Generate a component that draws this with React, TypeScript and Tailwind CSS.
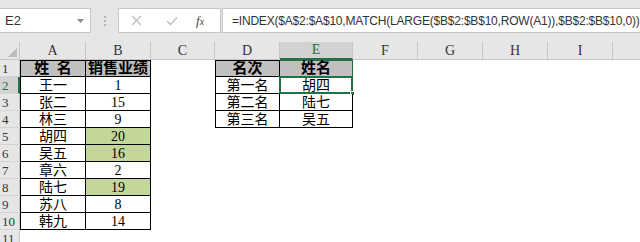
import React from "react";

const colW: Record<string, string> = {
  A: "w-[66px]",
  B: "w-[65px]",
  C: "w-[64px]",
  D: "w-[65px]",
  E: "w-[73px]",
  F: "w-[65px]",
  G: "w-[65px]",
  H: "w-[65px]",
  I: "w-[65px]",
  J: "w-[65px]",
};

const colKeys = ["A", "B", "C", "D", "E", "F", "G", "H", "I", "J"];

const colA = ["姓  名", "王一", "张二", "林三", "胡四", "吴五", "章六", "陆七", "苏八", "韩九"];
const colB = ["销售业绩", "1", "15", "9", "20", "16", "2", "19", "8", "14"];
const greenRows = [5, 6, 8];
const colD = ["名次", "第一名", "第二名", "第三名"];
const colE = ["姓名", "胡四", "陆七", "吴五"];

const cellFont = "font-['Liberation_Serif','Noto_Sans_CJK_SC',serif]";

function TableCell({
  w,
  text,
  row,
  left,
  bold,
  fill,
  selected,
  headE,
}: {
  w: string;
  text: string;
  row: number;
  left?: boolean;
  bold?: boolean;
  fill?: string;
  selected?: boolean;
  headE?: boolean;
}) {
  const top = row === 1 ? "border-t" : "";
  const l = left ? "border-l" : "";
  return (
    <div
      className={`relative box-border h-[17px] ${w} shrink-0 border-r border-b border-black ${top} ${l} ${fill ?? "bg-white"} ${headE ? "border-t-[#2d6b45] border-r-[#2d6b45]" : ""} flex items-center justify-center overflow-visible`}
    >
      <span
        className={`${cellFont} ${bold ? "font-bold text-[15px]" : "text-[14px]"} leading-[17px] text-black whitespace-pre`}
      >
        {text}
      </span>
      {selected && (
        <>
          <div className="pointer-events-none absolute -left-[1px] -top-[1px] -right-[1px] -bottom-[1px] border-2 border-[#217346]" />
          <div className="absolute -right-[3px] -bottom-[3px] h-[5px] w-[5px] border border-white bg-[#217346]" />
        </>
      )}
    </div>
  );
}

function EmptyCell({ w }: { w: string }) {
  return <div className={`h-[17px] ${w} shrink-0 bg-white`} />;
}

export default function App() {
  const rows = Array.from({ length: 11 }, (_, i) => i + 1);
  return (
    <div className="w-[640px] h-[242px] overflow-hidden bg-white">
      {/* Toolbar */}
      <div className="flex h-[42px] items-start bg-[#e6e6e6] pt-[8px]">
        <div className="box-border flex h-[25px] w-[91px] shrink-0 items-center justify-between border border-l-0 border-[#c6c6c6] bg-white pl-[5px] pr-[6px]">
          <span className="font-['Liberation_Sans',sans-serif] text-[13px] text-[#333]">E2</span>
          <svg width="7" height="4" viewBox="0 0 7 4">
            <path d="M0 0 L7 0 L3.5 4 Z" fill="#8a8a8a" />
          </svg>
        </div>
        <div className="flex w-[27px] shrink-0 flex-col items-center gap-[2px] pt-[8px]">
          <div className="h-[2px] w-[2px] bg-[#b5b5b5]" />
          <div className="h-[2px] w-[2px] bg-[#b5b5b5]" />
          <div className="h-[2px] w-[2px] bg-[#b5b5b5]" />
        </div>
        <div className="box-border flex h-[25px] w-[103px] shrink-0 items-center border border-[#c6c6c6] bg-white">
          <svg className="ml-[12px]" width="11" height="11" viewBox="0 0 11 11">
            <path d="M1 1 L10 10 M10 1 L1 10" stroke="#bdbdbd" strokeWidth="1.3" />
          </svg>
          <svg className="ml-[24px]" width="12" height="10" viewBox="0 0 12 10">
            <path d="M1 5 L4.5 8.5 L11 1.5" stroke="#bdbdbd" strokeWidth="1.3" fill="none" />
          </svg>
          <span className="ml-[18px] font-['Liberation_Serif',serif] text-[13px] italic text-[#444]">
            f<span className="text-[10px]">x</span>
          </span>
        </div>
        <div className="ml-[1px] box-border flex h-[25px] flex-1 items-center overflow-hidden border border-r-0 border-[#c6c6c6] bg-white pl-[9px]">
          <span className="font-['Liberation_Sans',sans-serif] text-[12px] tracking-[-0.2px] text-[#333] whitespace-nowrap">
            =INDEX($A$2:$A$10,MATCH(LARGE($B$2:$B$10,ROW(A1)),$B$2:$B$10,0))
          </span>
        </div>
      </div>

      {/* Column header row */}
      <div className="flex h-[18px]">
        <div className="box-border flex h-[18px] w-[20px] shrink-0 items-end justify-end border-r border-b border-[#c6c6c6] bg-[#e6e6e6] pb-[2px] pr-[2px]">
          <svg width="9" height="9" viewBox="0 0 9 9">
            <path d="M9 0 L9 9 L0 9 Z" fill="#bcbcbc" />
          </svg>
        </div>
        {colKeys.map((k) => (
          <div
            key={k}
            className={`box-border flex h-[18px] ${colW[k]} shrink-0 items-center justify-center border-r border-[#c6c6c6] ${
              k === "E"
                ? "border-b-2 border-b-[#217346] bg-[#d2d2d2] text-[#217346]"
                : "border-b border-b-[#c6c6c6] bg-[#e6e6e6] text-[#333]"
            }`}
          >
            {k !== "J" && (
              <span className="font-['Liberation_Serif',serif] text-[14px] leading-none">{k}</span>
            )}
          </div>
        ))}
      </div>

      {/* Rows */}
      {rows.map((r) => (
        <div key={r} className="flex h-[17px]">
          <div
            className={`box-border flex h-[17px] w-[20px] shrink-0 items-center border-b border-[#d4d4d4] pl-[2px] ${
              r === 2
                ? "border-r-2 border-r-[#217346] bg-[#d2d2d2] text-[#217346]"
                : "border-r border-r-[#c6c6c6] bg-[#e6e6e6] text-[#333]"
            }`}
          >
            <span className="font-['Liberation_Serif',serif] text-[13px] leading-none">{r}</span>
          </div>
          {r <= 10 ? (
            <>
              <TableCell w={colW.A} text={colA[r - 1]} row={r} left bold={r === 1} fill={r === 1 ? "bg-[#c0c0c0]" : undefined} />
              <TableCell
                w={colW.B}
                text={colB[r - 1]}
                row={r}
                bold={r === 1}
                fill={r === 1 ? "bg-[#c0c0c0]" : greenRows.includes(r) ? "bg-[#c4d79b]" : undefined}
              />
            </>
          ) : (
            <>
              <EmptyCell w={colW.A} />
              <EmptyCell w={colW.B} />
            </>
          )}
          <EmptyCell w={colW.C} />
          {r <= 4 ? (
            <>
              <TableCell w={colW.D} text={colD[r - 1]} row={r} left bold={r === 1} fill={r === 1 ? "bg-[#c0c0c0]" : undefined} />
              <TableCell
                w={colW.E}
                text={colE[r - 1]}
                row={r}
                bold={r === 1}
                fill={r === 1 ? "bg-[#c0c0c0]" : undefined}
                selected={r === 2}
                headE={r === 1}
              />
            </>
          ) : (
            <>
              <EmptyCell w={colW.D} />
              <EmptyCell w={colW.E} />
            </>
          )}
          <EmptyCell w={colW.F} />
          <EmptyCell w={colW.G} />
          <EmptyCell w={colW.H} />
          <EmptyCell w={colW.I} />
          <EmptyCell w={colW.J} />
        </div>
      ))}
    </div>
  );
}
